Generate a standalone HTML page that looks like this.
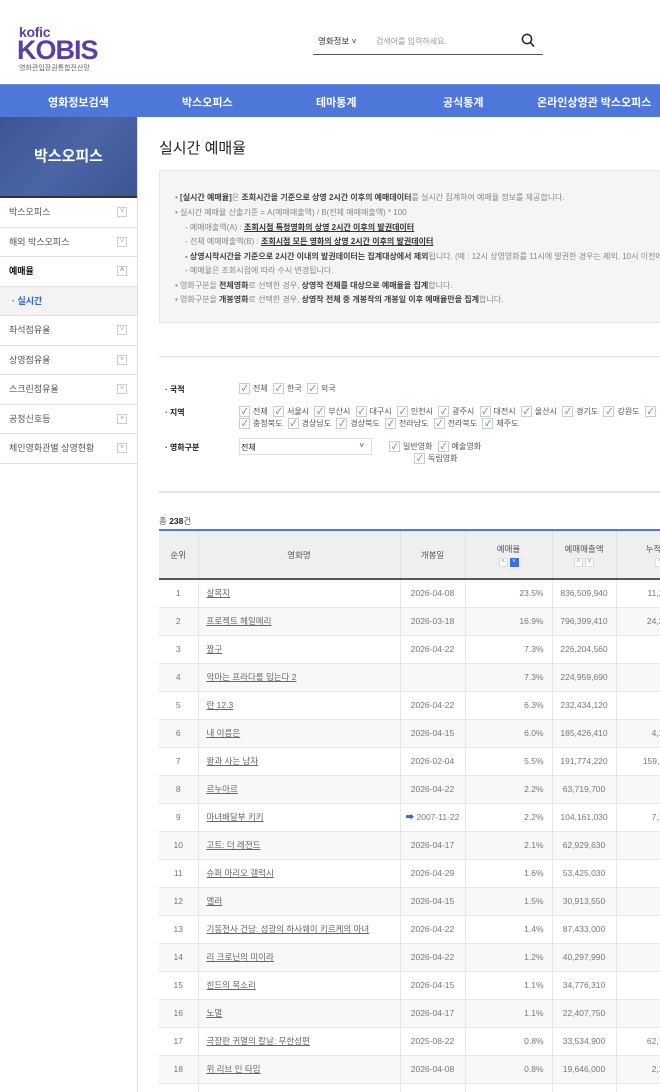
<!DOCTYPE html>
<html><head><meta charset="utf-8">
<style>
*{margin:0;padding:0;box-sizing:border-box}
html,body{width:660px;height:1092px;overflow:hidden;background:#fff}
body{position:relative;font-family:"Liberation Sans","Noto Sans CJK KR",sans-serif;color:#333}
.a{position:absolute;white-space:nowrap}
.nav{position:absolute;left:0;top:84px;width:660px;height:33px;background:#4d78da;border-top:1px solid #6a8fe0}
.nav span{position:absolute;top:9px;color:#fff;font-size:11px;font-weight:bold}
.side{position:absolute;left:0;top:117px;width:138px;height:975px;border-right:1px solid #ddd}
.shead{height:81px;background:#41599a;background:linear-gradient(135deg,#3d5593,#4a64a6 50%,#3d5593);border-bottom:2px solid #333;color:#fff;font-size:15px;font-weight:bold;text-align:center;line-height:80px}
.mi{height:29.5px;border-bottom:1px solid #e2e2e2;font-size:9px;color:#555;padding-left:9px;line-height:29px;position:relative}
.mi i{position:absolute;right:10px;top:9px;width:10px;height:10px;border:1px solid #ccc;font-style:normal;font-size:7px;color:#999;line-height:8px;text-align:center}
.info{position:absolute;left:159px;top:170px;width:510px;height:153px;background:#f5f5f5;border:1px solid #e6e6e6;font-size:8px;color:#888}
.info div{position:absolute;left:15px;white-space:nowrap}
.info b{color:#444}
.info u{color:#333;font-weight:bold}
.cb{display:inline-block;width:11px;height:11px;border:1px solid #ccc;background:#fff;color:#3465d6;font-size:8px;line-height:9px;text-align:center;vertical-align:middle;margin-right:3px;margin-left:3px}
.f{font-size:8px;color:#555}
table{position:absolute;left:159px;top:529px;border-collapse:collapse;width:555px;table-layout:fixed;font-size:8.5px;color:#777}
th{background:#efefef;font-weight:normal;color:#555;height:49px;border-left:1px solid #e0e0e0;border-top:2px solid #4d78da;border-bottom:2px solid #555}
th:first-child{border-left:none}
td{height:28px;border-left:1px solid #e6e6e6;border-bottom:1px solid #e6e6e6;text-align:center}
td:first-child{border-left:none}
tr:nth-child(odd) td{background:#f8f8f8}
td.n{text-align:left;padding-left:8px}
td.n u{color:#666}
td.r{text-align:right;padding-right:8px}
.sb{display:inline-block;width:9px;height:9px;border:1px solid #ddd;background:#fff;font-size:6px;line-height:7px;color:#888;margin:0 1px}
.sb.on{background:#3d6fd8;border-color:#3d6fd8;color:#fff}
</style></head><body>
<div class="a" style="left:19px;top:24px;font-size:14px;font-weight:bold;color:#5b3fa3;letter-spacing:-0.3px">kofic</div>
<div class="a" style="left:17px;top:35px;font-size:27px;font-weight:bold;color:#5b3fa3;letter-spacing:-1px">KOBIS</div>
<div class="a" style="left:19px;top:63px;font-size:7px;color:#666">영화관입장권통합전산망</div>
<div class="a" style="left:318px;top:35px;font-size:8.5px;color:#333">영화정보 ˅</div>
<div class="a" style="left:376px;top:36px;font-size:8px;color:#999">검색어를 입력하세요.</div>
<svg class="a" style="left:521px;top:33px" width="14" height="15" viewBox="0 0 14 15"><circle cx="6" cy="6" r="4.6" fill="none" stroke="#222" stroke-width="1.5"/><path d="M9.3 9.5L13 13.6" stroke="#222" stroke-width="1.6"/></svg>
<div class="a" style="left:313px;top:54px;width:230px;height:1px;background:#555"></div>
<div class="nav"><span style="left:48px">영화정보검색</span><span style="left:182px">박스오피스</span><span style="left:316px">테마통계</span><span style="left:443px">공식통계</span><span style="left:537px">온라인상영관 박스오피스</span></div>
<div class="side"><div class="shead">박스오피스</div>
<div class="mi">박스오피스<i>˅</i></div>
<div class="mi">해외 박스오피스<i>˅</i></div>
<div class="mi" style="color:#111;font-weight:bold">예매율<i>˄</i></div>
<div class="mi" style="background:#f3f3f3;color:#3465d6;font-weight:bold;padding-left:12px">· 실시간</div>
<div class="mi">좌석점유율<i>˅</i></div>
<div class="mi">상영점유율<i>˅</i></div>
<div class="mi">스크린점유율<i>˅</i></div>
<div class="mi">공정신호등<i>˅</i></div>
<div class="mi">체인영화관별 상영현황<i>˅</i></div>
</div>
<div class="a" style="left:159px;top:137px;font-size:15px;color:#222">실시간 예매율</div>
<div class="info">
<div style="top:21px">• <b>[실시간 예매율]</b>은 <b>조회시간을 기준으로 상영 2시간 이후의 예매데이터</b>를 실시간 집계하여 예매율 정보를 제공합니다.</div>
<div style="top:36px">• 실시간 예매율 산출기준 = A(예매매출액) / B(전체 예매매출액) * 100</div>
<div style="top:51px;left:25px">- 예매매출액(A) : <u>조회시점 특정영화의 상영 2시간 이후의 발권데이터</u></div>
<div style="top:65px;left:25px">- 전체 예매매출액(B) : <u>조회시점 모든 영화의 상영 2시간 이후의 발권데이터</u></div>
<div style="top:80px;left:25px"><b>- 상영시작시간을 기준으로 2시간 이내의 발권데이터는 집계대상에서 제외</b>됩니다. (예 : 12시 상영영화를 11시에 발권한 경우는 제외, 10시 이전에</div>
<div style="top:94px;left:25px">- 예매율은 조회시점에 따라 수시 변경됩니다.</div>
<div style="top:109px">• 영화구분을 <b>전체영화</b>로 선택한 경우, <b>상영작 전체를 대상으로 예매율을 집계</b>합니다.</div>
<div style="top:123px">• 영화구분을 <b>개봉영화</b>로 선택한 경우, <b>상영작 전체 중 개봉작의 개봉일 이후 예매율만을 집계</b>합니다.</div>
</div>
<div class="a" style="left:159px;top:356px;width:501px;height:1px;background:#ddd"></div>
<div class="a f" style="left:165px;top:384px;font-weight:bold;color:#222">· 국적</div>
<div class="a f" style="left:236px;top:383px"><span class="cb">✓</span>전체 <span class="cb">✓</span>한국 <span class="cb">✓</span>외국</div>
<div class="a f" style="left:165px;top:407px;font-weight:bold;color:#222">· 지역</div>
<div class="a f" style="left:236px;top:406px"><span class="cb">✓</span>전체 <span class="cb">✓</span>서울시 <span class="cb">✓</span>부산시 <span class="cb">✓</span>대구시 <span class="cb">✓</span>인천시 <span class="cb">✓</span>광주시 <span class="cb">✓</span>대전시 <span class="cb">✓</span>울산시 <span class="cb">✓</span>경기도 <span class="cb">✓</span>강원도 <span class="cb">✓</span></div>
<div class="a f" style="left:236px;top:418px"><span class="cb">✓</span>충청북도 <span class="cb">✓</span>경상남도 <span class="cb">✓</span>경상북도 <span class="cb">✓</span>전라남도 <span class="cb">✓</span>전라북도 <span class="cb">✓</span>제주도</div>
<div class="a f" style="left:165px;top:442px;font-weight:bold;color:#222">· 영화구분</div>
<div class="a" style="left:239px;top:438px;width:133px;height:17px;border:1px solid #ddd;font-size:8px;color:#222;padding:3px 1px">전체<span style="position:absolute;right:7px;top:2px;color:#444">˅</span></div>
<div class="a f" style="left:386px;top:441px"><span class="cb">✓</span>일반영화 <span class="cb">✓</span>예술영화</div>
<div class="a f" style="left:411px;top:453px"><span class="cb">✓</span>독립영화</div>
<div class="a" style="left:159px;top:491px;width:501px;height:2px;background:#e2e2e2"></div>
<div class="a" style="left:159px;top:515px;font-size:8.5px;color:#555">총 <b style="color:#222">238</b>건</div>
<table>
<colgroup><col style="width:39px"><col style="width:202px"><col style="width:65px"><col style="width:87px"><col style="width:64px"><col style="width:98px"></colgroup>
<tr><th>순위</th><th>영화명</th><th>개봉일</th><th>예매율<br><span class="sb">˄</span><span class="sb on">˅</span></th><th>예매매출액<br><span class="sb">˄</span><span class="sb">˅</span></th><th>누적매출액<br><span class="sb">˄</span><span class="sb">˅</span></th></tr>
<tr><td>1</td><td class="n"><u>살목지</u></td><td>2026-04-08</td><td class="r">23.5%</td><td>836,509,940</td><td class="r">11,254,390,000</td></tr>
<tr><td>2</td><td class="n"><u>프로젝트 헤일메리</u></td><td>2026-03-18</td><td class="r">16.9%</td><td>796,399,410</td><td class="r">24,310,220,000</td></tr>
<tr><td>3</td><td class="n"><u>짱구</u></td><td>2026-04-22</td><td class="r">7.3%</td><td>226,204,560</td><td class="r"></td></tr>
<tr><td>4</td><td class="n"><u>악마는 프라다를 입는다 2</u></td><td></td><td class="r">7.3%</td><td>224,959,690</td><td class="r"></td></tr>
<tr><td>5</td><td class="n"><u>란 12.3</u></td><td>2026-04-22</td><td class="r">6.3%</td><td>232,434,120</td><td class="r"></td></tr>
<tr><td>6</td><td class="n"><u>내 이름은</u></td><td>2026-04-15</td><td class="r">6.0%</td><td>185,426,410</td><td class="r">4,120,330,000</td></tr>
<tr><td>7</td><td class="n"><u>왕과 사는 남자</u></td><td>2026-02-04</td><td class="r">5.5%</td><td>191,774,220</td><td class="r">159,320,110,000</td></tr>
<tr><td>8</td><td class="n"><u>르누아르</u></td><td>2026-04-22</td><td class="r">2.2%</td><td>63,719,700</td><td class="r"></td></tr>
<tr><td>9</td><td class="n"><u>마녀배달부 키키</u></td><td><span style="color:#3465d6">➡</span> 2007-11-22</td><td class="r">2.2%</td><td>104,161,030</td><td class="r">7,120,330,000</td></tr>
<tr><td>10</td><td class="n"><u>고트: 더 레전드</u></td><td>2026-04-17</td><td class="r">2.1%</td><td>62,929,630</td><td class="r"></td></tr>
<tr><td>11</td><td class="n"><u>슈퍼 마리오 갤럭시</u></td><td>2026-04-29</td><td class="r">1.6%</td><td>53,425,030</td><td class="r"></td></tr>
<tr><td>12</td><td class="n"><u>엘러</u></td><td>2026-04-15</td><td class="r">1.5%</td><td>30,913,550</td><td class="r"></td></tr>
<tr><td>13</td><td class="n"><u>기동전사 건담: 섬광의 하사웨이 키르케의 마녀</u></td><td>2026-04-22</td><td class="r">1.4%</td><td>87,433,000</td><td class="r"></td></tr>
<tr><td>14</td><td class="n"><u>리 크로닌의 미이라</u></td><td>2026-04-22</td><td class="r">1.2%</td><td>40,297,990</td><td class="r"></td></tr>
<tr><td>15</td><td class="n"><u>힌드의 목소리</u></td><td>2026-04-15</td><td class="r">1.1%</td><td>34,776,310</td><td class="r"></td></tr>
<tr><td>16</td><td class="n"><u>노멀</u></td><td>2026-04-17</td><td class="r">1.1%</td><td>22,407,750</td><td class="r"></td></tr>
<tr><td>17</td><td class="n"><u>극장판 귀멸의 칼날: 무한성편</u></td><td>2025-08-22</td><td class="r">0.8%</td><td>33,534,900</td><td class="r">62,710,220,000</td></tr>
<tr><td>18</td><td class="n"><u>위 리브 인 타임</u></td><td>2026-04-08</td><td class="r">0.8%</td><td>19,646,000</td><td class="r">2,120,330,000</td></tr>
<tr><td>19</td><td class="n"></td><td></td><td></td><td></td><td></td></tr>
</table>
</body></html>
